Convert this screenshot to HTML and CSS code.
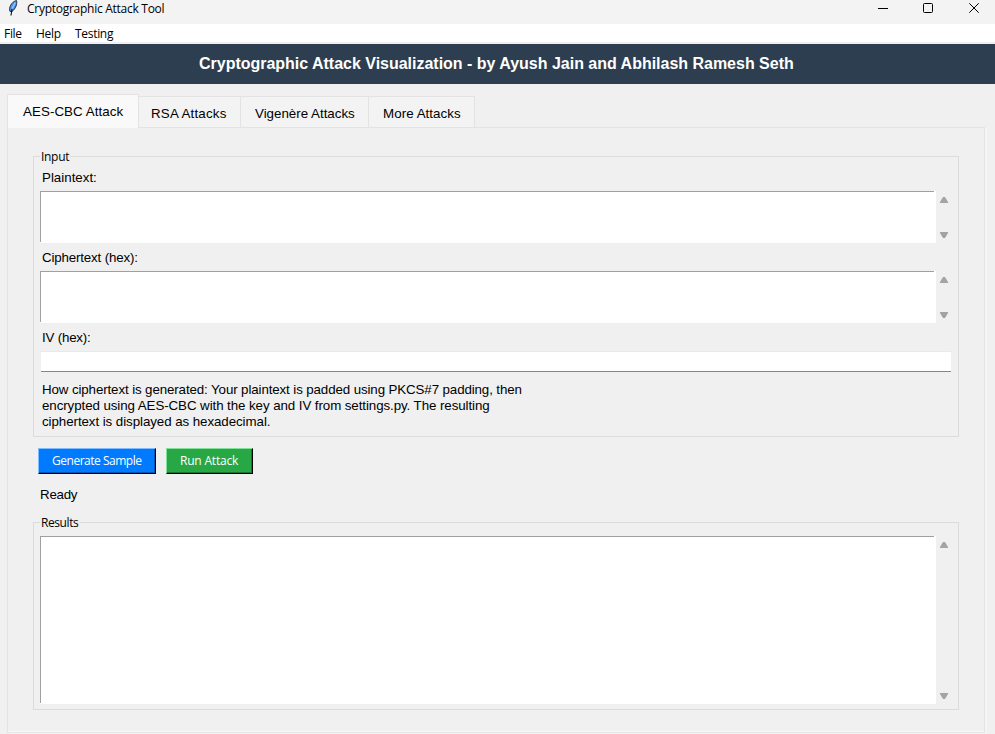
FILE: index.html
```html
<!DOCTYPE html>
<html lang="en">
<head>
<meta charset="utf-8">
<title>Cryptographic Attack Tool</title>
<link rel="stylesheet" href="styles.css">
</head>
<body>
<div class="titlebar">
  <svg class="feather" width="12" height="17" viewBox="0 0 12 17"><path d="M3 11.5C1.5 8 4 2 9.5 .5C10.5 4 8.5 9 5 11.5Z" fill="#4a90e2" stroke="#25354f" stroke-width="1"/><path d="M8.3 2.5L5 8.5" stroke="#9fcbff" stroke-width="1.3"/><path d="M5 9L4 15.5" stroke="#111" stroke-width="1.1"/></svg>
  <span class="title">Cryptographic Attack Tool</span>
  <svg class="controls" width="112" height="16" viewBox="0 0 112 16" fill="none" stroke="#000"><path d="M5 8.5H15"/><rect x="50.5" y="3.5" width="9" height="9" rx="1"/><path d="M96.3 3.3L105.7 12.7M105.7 3.3L96.3 12.7"/></svg>
</div>
<nav class="menu"><span class="m-file">File</span><span class="m-help">Help</span><span class="m-test">Testing</span></nav>
<header class="banner"><span>Cryptographic Attack Visualization - by Ayush Jain and Abhilash Ramesh Seth</span></header>
<div class="tabs">
  <div class="tab active"><span>AES-CBC Attack</span></div>
  <div class="tab rsa"><span>RSA Attacks</span></div>
  <div class="tab vig"><span>Vigenère Attacks</span></div>
  <div class="tab more"><span>More Attacks</span></div>
</div>
<main class="pane">
  <section class="group input">
    <h2 class="legend">Input</h2>
    <div class="label"><span class="l-plain">Plaintext:</span></div>
    <div class="row"><div class="text"></div><div class="scroll"><svg width="8" height="6"><path d="M0 6V5L3 0H5L8 5V6Z"/></svg><svg width="8" height="6"><path d="M0 0V1L3 6H5L8 1V0Z"/></svg></div></div>
    <div class="label"><span class="l-cipher">Ciphertext (hex):</span></div>
    <div class="row"><div class="text"></div><div class="scroll"><svg width="8" height="6"><path d="M0 6V5L3 0H5L8 5V6Z"/></svg><svg width="8" height="6"><path d="M0 0V1L3 6H5L8 1V0Z"/></svg></div></div>
    <div class="label"><span class="l-iv">IV (hex):</span></div>
    <div class="entry"></div>
    <p class="note"><span class="n1">How ciphertext is generated: Your plaintext is padded using PKCS#7 padding, then</span><br><span class="n2">encrypted using AES-CBC with the key and IV from settings.py. The resulting</span><br><span class="n3">ciphertext is displayed as hexadecimal.</span></p>
  </section>
  <div class="buttons">
    <button class="btn blue"><span>Generate Sample</span></button>
    <button class="btn green"><span>Run Attack</span></button>
  </div>
  <div class="status"><span>Ready</span></div>
  <section class="group results">
    <h2 class="legend">Results</h2>
    <div class="row"><div class="text"></div><div class="scroll"><svg width="8" height="6"><path d="M0 6V5L3 0H5L8 5V6Z"/></svg><svg width="8" height="6"><path d="M0 0V1L3 6H5L8 1V0Z"/></svg></div></div>
  </section>
</main>
</body>
</html>
```
FILE: styles.css
```css
* { box-sizing: border-box; }
html, body { margin: 0; height: 734px; overflow: hidden; }
body { background: #f0f0f0; color: #000; font: 13.333px/16px "Liberation Sans", Arial, sans-serif; white-space: nowrap; }
svg { display: block; flex: none; }
.titlebar { display: flex; height: 24px; background: #f3f3f3; padding-left: 7px; font: 12px/18px "Open Sans", sans-serif; }
.title { margin-left: 8px; letter-spacing: -.27px; }
.controls { margin-left: auto; margin-right: 10px; }
.menu { display: flex; height: 18px; background: #fff; padding-left: 4px; font: 12px/20px "Open Sans", sans-serif; letter-spacing: -.3px; }
.menu span { width: 32px; }
.menu .m-help { width: 39px; }
.banner { height: 40px; margin-top: 2px; background: #2c3e50; color: #fff; font-weight: bold; font-size: 16px; line-height: 39px; padding-left: 199px; letter-spacing: -.013px; }
.tabs { display: flex; align-items: flex-end; height: 44px; padding-left: 7px; position: relative; z-index: 1; }
.tab { height: 32px; background: #f3f3f3; border: 1px solid #e3e3e3; border-left: 0; padding: 9px 0 0 14px; }
.active { width: 132px; height: 34px; background: #f9f9f9; border-left: 1px solid #e3e3e3; border-bottom: 0; padding: 9px 0 0 15px; letter-spacing: .07px; }
.rsa { width: 102px; padding-left: 12px; letter-spacing: .2px; }
.vig { width: 128px; }
.more { width: 106px; letter-spacing: .06px; }
.pane { width: 978px; height: 606px; margin: -1px 0 0 7px; border: 1px solid #e3e3e3; box-shadow: 2px 1px #f5f5f5, inset 0 -1px #f9f9f9; padding: 28px 25px 0; }
.group { width: 926px; border: 1px solid #dcdcdc; padding: 0 6px; }
.input { height: 281px; }
.results { height: 188px; margin-top: 19px; }
.legend { width: max-content; height: 16px; margin: -9px 0 0; padding: 0 1px; background: #f0f0f0; font: 12px/18px "Open Sans", sans-serif; letter-spacing: -.3px; }
.results .legend { letter-spacing: -.42px; }
.label { height: 28px; padding: 7px 0 0 2px; }
.legend + .label { height: 27px; padding-top: 6px; }
.l-cipher { letter-spacing: -.16px; }
.l-iv { letter-spacing: -.2px; }
.row { display: flex; height: 52px; }
.text { width: 896px; background: linear-gradient(#a0a0a0, #a0a0a0) 0 0 / 894px 1px no-repeat, linear-gradient(#a0a0a0, #a0a0a0) 0 0 / 1px calc(100% - 1px) no-repeat, #fff; }
.scroll { display: flex; flex-direction: column; justify-content: space-between; padding: 6px 4px 5px; fill: #a3a3a3; }
.entry { width: 910px; height: 21px; margin-left: 1px; background: #fff; border-top: 1px solid #e9e9e9; border-bottom: 1px solid #868686; }
.note { margin: 10px 0 0 2px; }
.n1 { letter-spacing: -.115px; }
.n2 { letter-spacing: -.08px; }
.n3 { letter-spacing: -.07px; }
.buttons { display: flex; gap: 10px; margin: 11px 0 0 5px; }
.btn { height: 26px; border: 1px solid; color: #fff; padding: 0 0 0 13px; text-align: left; font: 12px/24px "Open Sans", sans-serif; white-space: nowrap; }
.blue { width: 118px; letter-spacing: -.48px; background: #007bff; border-color: #7fbdff #000 #000 #7fbdff; box-shadow: inset -1px -1px #0056b2; }
.green { width: 87px; letter-spacing: -.2px; background: #28a745; border-color: #82e099 #000 #000 #82e099; box-shadow: inset -1px -1px #1c7530; }
.status { height: 29px; padding: 13px 0 0 7px; letter-spacing: -.25px; }
.results .row { height: 168px; margin-top: 6px; }
```
